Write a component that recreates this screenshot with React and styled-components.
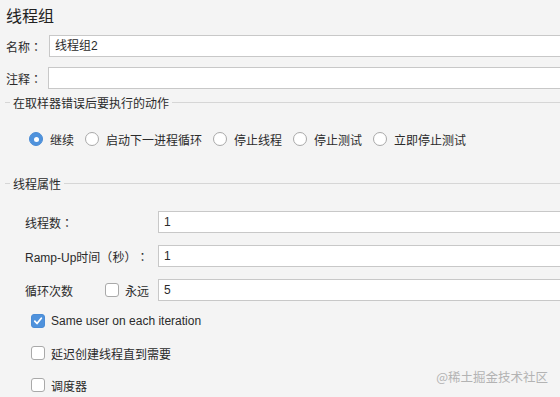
import React from "react";
import styled, { createGlobalStyle } from "styled-components";

const GlobalStyle = createGlobalStyle`
  html, body {
    margin: 0;
    padding: 0;
    background: #f4f4f4;
    overflow: hidden;
  }
  body {
    font-family: "Liberation Sans", "Noto Sans CJK SC", sans-serif;
    font-size: 12px;
    color: #2b2b2b;
    text-spacing-trim: space-all;
  }
`;

const Page = styled.div`
  position: relative;
  width: 560px;
  height: 397px;
  padding: 0 0 0 6px;
  box-sizing: border-box;
  overflow: hidden;
`;

const Title = styled.div`
  height: 35px;
  padding-top: 5px;
  box-sizing: border-box;
  font-size: 16px;
  line-height: 24px;
  color: #222;
`;

const FieldRow = styled.div`
  display: flex;
  align-items: center;
  height: 22px;
  margin-top: ${p => p.$top || 0}px;
  padding-left: ${p => p.$indent || 0}px;
`;

const Label = styled.span`
  flex: none;
  width: ${p => p.$width}px;
  white-space: nowrap;
`;

// fullwidth punctuation drawn centred, as in the original
const Punct = styled.span`
  font-family: "Noto Sans CJK TC", sans-serif;
`;

const TextBox = styled.div`
  flex: 1;
  height: 22px;
  margin-right: -4px;
  box-sizing: border-box;
  background: #fff;
  border: 1px solid #c8c8c8;
  padding-left: 5px;
  line-height: 20px;
`;

const Heading = styled.div`
  display: flex;
  align-items: center;
  height: 16px;
  margin-top: ${p => p.$top}px;
  gap: 3px;
  &::before {
    content: "";
    width: 5px;
    margin-left: -1px;
    border-top: 1px solid #d6d6d6;
  }
  &::after {
    content: "";
    flex: 1;
    border-top: 1px solid #d6d6d6;
  }
`;

const RadioRow = styled.div`
  display: flex;
  align-items: center;
  height: 16px;
  margin-top: 21px;
  padding-left: 23px;
  gap: 11px;
`;

const Option = styled.label`
  display: flex;
  align-items: center;
  gap: 7px;
  white-space: nowrap;
`;

const Radio = styled.span`
  width: 14px;
  height: 14px;
  box-sizing: border-box;
  border-radius: 50%;
  border: 1px solid ${p => (p.$on ? "#4a8cd6" : "#a9a9a9")};
  background: ${p => (p.$on ? "#4f92dc" : "#fff")};
  display: flex;
  align-items: center;
  justify-content: center;
  &::after {
    content: "";
    display: ${p => (p.$on ? "block" : "none")};
    width: 5px;
    height: 5px;
    border-radius: 50%;
    background: #fff;
  }
`;

const Box = styled.span`
  flex: none;
  width: 14px;
  height: 14px;
  box-sizing: border-box;
  border-radius: 3px;
  border: 1px solid ${p => (p.$on ? "#4a8cd6" : "#a9a9a9")};
  background: ${p => (p.$on ? "#4f92dc" : "#fff")};
  display: flex;
  align-items: center;
  justify-content: center;
`;

const Forever = styled.div`
  display: flex;
  align-items: center;
  gap: 6px;
  width: 53px;
  flex: none;
`;

const Checks = styled.div`
  display: flex;
  flex-direction: column;
  gap: 12px;
  margin-top: 10px;
  padding-left: 25px;
`;

const CheckRow = styled.label`
  display: flex;
  align-items: center;
  height: 20px;
  gap: 6px;
`;

const Watermark = styled.div`
  position: absolute;
  right: 12px;
  bottom: 11px;
  font-size: 12.5px;
  color: #b3b3b3;
  font-family: "Noto Sans CJK SC", sans-serif;
`;

const Tick = () => (
  <svg width="10" height="10" viewBox="0 0 10 10">
    <path d="M1.8 5.2 L4 7.5 L8.3 2.3" fill="none" stroke="#fff" strokeWidth="1.8" strokeLinecap="round" strokeLinejoin="round" />
  </svg>
);

const actions = ["继续", "启动下一进程循环", "停止线程", "停止测试", "立即停止测试"];

const checks = [
  { text: "Same user on each iteration", on: true },
  { text: "延迟创建线程直到需要", on: false },
  { text: "调度器", on: false },
];

export default function App() {
  return (
    <>
      <GlobalStyle />
      <Page>
        <Title>线程组</Title>
        <FieldRow>
          <Label $width={43}>名称<Punct>：</Punct></Label>
          <TextBox>线程组2</TextBox>
        </FieldRow>
        <FieldRow $top={10}>
          <Label $width={42}>注释<Punct>：</Punct></Label>
          <TextBox />
        </FieldRow>

        <Heading $top={5}>在取样器错误后要执行的动作</Heading>
        <RadioRow>
          {actions.map((a, i) => (
            <Option key={a}>
              <Radio $on={i === 0} />
              {a}
            </Option>
          ))}
        </RadioRow>

        <Heading $top={28}>线程属性</Heading>
        <FieldRow $top={20} $indent={19}>
          <Label $width={133}>线程数<Punct>：</Punct></Label>
          <TextBox>1</TextBox>
        </FieldRow>
        <FieldRow $top={12} $indent={19}>
          <Label $width={133}>
            Ramp-Up时间<Punct>（</Punct>秒<Punct>）：</Punct>
          </Label>
          <TextBox>1</TextBox>
        </FieldRow>
        <FieldRow $top={12} $indent={19}>
          <Label $width={80}>循环次数</Label>
          <Forever>
            <Box />
            永远
          </Forever>
          <TextBox>5</TextBox>
        </FieldRow>

        <Checks>
          {checks.map(c => (
            <CheckRow key={c.text}>
              <Box $on={c.on}>{c.on && <Tick />}</Box>
              {c.text}
            </CheckRow>
          ))}
        </Checks>

        <Watermark>@稀土掘金技术社区</Watermark>
      </Page>
    </>
  );
}
